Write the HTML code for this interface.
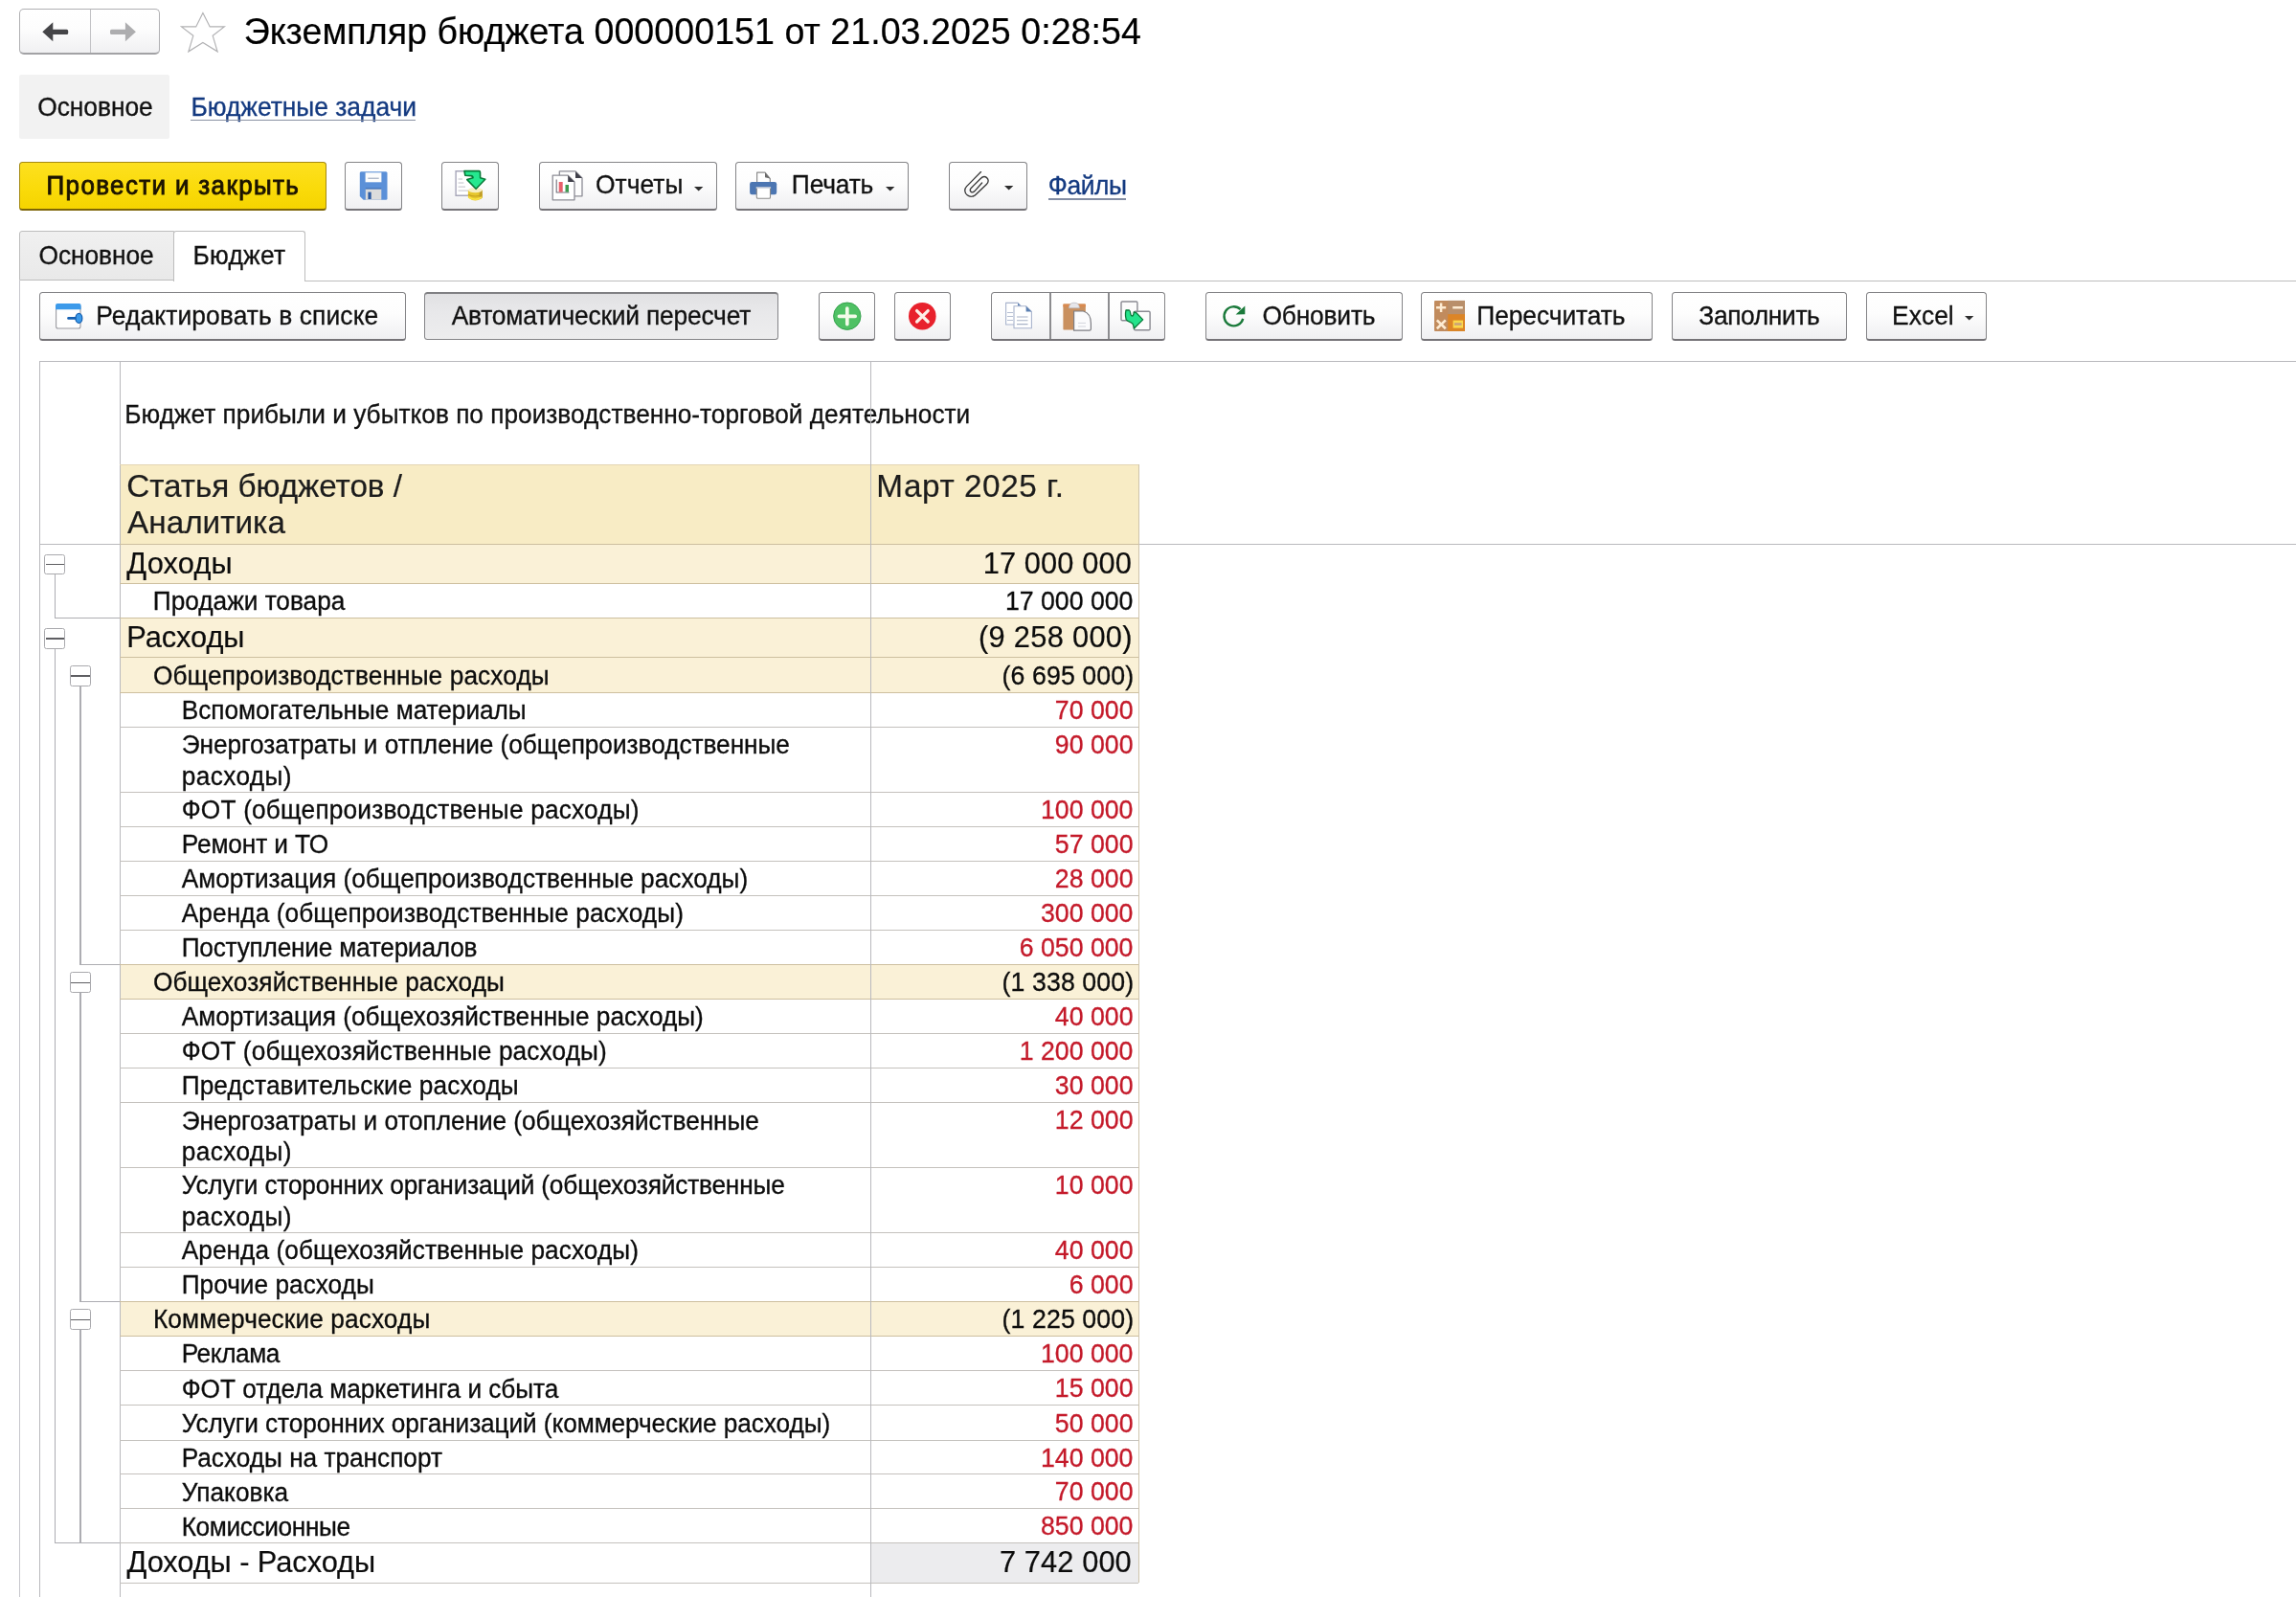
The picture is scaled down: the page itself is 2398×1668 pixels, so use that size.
<!DOCTYPE html><html><head><meta charset="utf-8"><title>1C</title><style>
html,body{margin:0;padding:0;background:#fff;}
body{width:2398px;height:1668px;overflow:hidden;position:relative;font-family:"Liberation Sans",sans-serif;}
#L{position:absolute;left:0;top:0;width:2398px;height:1668px;will-change:transform;}
.t{position:absolute;white-space:nowrap;transform:scaleY(1.06);transform-origin:0 84.65%;-webkit-text-stroke:0.3px;}
.a{position:absolute;}
.btn{position:absolute;box-sizing:border-box;border:1.5px solid #848487;border-bottom:2.7px solid #757377;border-radius:3.5px;background:linear-gradient(#ffffff 0%,#fdfdfd 45%,#f0f0f2 100%);}
.btn.pressed{background:linear-gradient(#e1e1e3,#e8e8ea 40%,#ededee);border:1.5px solid #858588;border-top:2.4px solid #808083;border-bottom:1.6px solid #858588;}
.hl{position:absolute;height:1px;}
.vl{position:absolute;width:1px;}
svg{position:absolute;overflow:visible;}
</style></head><body><div id="L">
<div class="btn" style="left:19.8px;top:9px;width:146.8px;height:48.2px;border-radius:5px;border:1.4px solid #b0b0b3;border-bottom:2px solid #a2a2a5;"></div>
<div class="vl" style="left:94px;top:10.4px;height:45px;background:#c2c2c5;"></div>
<svg style="left:40px;top:20px" width="36" height="28" viewBox="40 20 36 28"><path d="M44.3 33.3 L55.3 23.3 L55.3 30.7 L69.6 30.7 Q71.2 30.7 71.2 32.3 L71.2 34.4 Q71.2 36 69.6 36 L55.3 36 L55.3 43.2 Z" fill="#454548"/></svg>
<svg style="left:110px;top:20px" width="36" height="28" viewBox="110 20 36 28"><path d="M141.9 33.3 L130.9 23.3 L130.9 30.7 L116.6 30.7 Q115 30.7 115 32.3 L115 34.4 Q115 36 116.6 36 L130.9 36 L130.9 43.2 Z" fill="#adadaf"/></svg>
<svg style="left:186px;top:10px" width="52" height="48" viewBox="186 10 52 48"><path d="M211.9 13.6 L219.2 27.9 L234.3 27.9 L222.2 37.3 L227.1 53.8 L211.9 44.5 L196.9 53.8 L201.8 37.3 L189.5 27.9 L204.7 27.9 Z" fill="#fff" stroke="#b2b2b4" stroke-width="1.2" stroke-linejoin="miter"/></svg>
<div class="t" style="top:15.07px;font-size:37.6px;line-height:37.6px;color:#000;transform:scaleY(1.02);-webkit-text-stroke:0.2px;letter-spacing:0.04px;left:254.68px;">Экземпляр бюджета 000000151 от 21.03.2025 0:28:54</div>
<div class="a" style="left:20px;top:78px;width:157px;height:67px;background:#f2f2f2;border-radius:2px;"></div>
<div class="t" style="top:98.65px;font-size:26.4px;line-height:26.4px;color:#111;letter-spacing:-0.066px;left:39.26px;">Основное</div>
<div class="t" style="top:98.75px;font-size:26.4px;line-height:26.4px;color:#143a80;letter-spacing:-0.02px;left:199.44px;">Бюджетные задачи</div>
<div class="hl" style="left:199px;top:124.7px;width:235px;height:1.5px;background:#8b92a3;"></div>
<div class="btn" style="left:19.9px;top:169px;width:321.6px;height:50.8px;background:linear-gradient(#fde020,#fadb0a 55%,#f5d400);border:1.5px solid #a58a12;border-bottom:2.5px solid #7d6507;"></div>
<div class="t" style="top:180.79px;font-size:26.0px;line-height:26.0px;color:#1c1400;letter-spacing:1.343px;left:48.59px;-webkit-text-stroke:0.85px;">Провести и закрыть</div>
<div class="btn" style="left:360.2px;top:169.2px;width:59.5px;height:50.6px;"></div>
<svg style="left:372px;top:176px" width="36" height="36" viewBox="372 176 36 36"><path d="M377.2 179.3 H403 Q404.5 179.3 404.5 180.8 V207.2 Q404.5 208.7 403 208.7 H379.6 L375.8 205 V180.8 Q375.8 179.3 377.2 179.3 Z" fill="#5b90d8"/><rect x="381.6" y="180.3" width="16.8" height="10" fill="#fdfdfd"/><rect x="384.3" y="185.6" width="11.4" height="1.3" fill="#a9b4c6"/><rect x="381.8" y="197.3" width="16.5" height="11.4" fill="#dcdcdc"/><rect x="381.8" y="196.3" width="16.5" height="1.2" fill="#3f6fb6"/><rect x="384.4" y="200.6" width="3.3" height="7.4" fill="#2f5da3"/></svg>
<div class="btn" style="left:461.4px;top:169.2px;width:59.6px;height:50.6px;"></div>
<svg style="left:472px;top:174px" width="40" height="40" viewBox="472 174 40 40"><rect x="476.1" y="178.8" width="16" height="25.4" fill="#fff"/><path d="M492 178.8 H476.1 V204.2 H492" fill="none" stroke="#a8a7ba" stroke-width="1.4"/><g stroke="#c0c0c8" stroke-width="1"><path d="M478.6 187 H483 M478.6 191 H484.4 M478.6 195.1 H486 M478.6 199.1 H489"/></g><path d="M488.9 198.5 V206.6 Q496.3 212.4 503.7 206.6 V198.5 Z" fill="#e6c62e"/><path d="M500.6 198.5 V208.6 Q503 207.6 503.7 206.6 V198.5 Z" fill="#bf9d2c"/><ellipse cx="496.3" cy="198.6" rx="7.4" ry="2.6" fill="#f7eec4"/><path d="M489 203.2 Q496.3 206.8 503.6 203.2" stroke="#c6a21e" stroke-width="1.1" fill="none"/><path d="M489.4 206 Q496.3 210.4 503.2 206" stroke="#f9e244" stroke-width="1.6" fill="none"/><path d="M485 178.5 L500.4 178.6 Q501.6 178.8 501.5 180 L501.6 185.8 L506.8 187.3 L497.1 197.3 L487.8 187.6 L494 185.8 Q494 183.8 492 183.6 L485.8 183.2 Z" fill="#25e88f" stroke="#087a38" stroke-width="1.6" stroke-linejoin="round"/></svg>
<div class="btn" style="left:562.8px;top:169.2px;width:186.2px;height:50.6px;"></div>
<svg style="left:574px;top:176px" width="38" height="36" viewBox="574 176 38 36"><path d="M584.3 178.9 H601 L608 186 V204.8 H584.3 Z" fill="#fdfdfd" stroke="#8d8d96" stroke-width="1.3" stroke-linejoin="round"/><path d="M601 178.9 V186 H608 Z" fill="#40404a"/><path d="M577.2 183.2 H593.2 L600 190 V208.8 H577.2 Z" fill="#fff" stroke="#8d8d96" stroke-width="1.3" stroke-linejoin="round"/><path d="M593.2 183.2 V190 H600 Z" fill="#40404a"/><path d="M581.2 187.4 V201 H594.4" fill="none" stroke="#70707a" stroke-width="1.1"/><rect x="583.7" y="190" width="4" height="10.6" fill="#e8606b"/><rect x="590.5" y="193" width="3.5" height="7.6" fill="#3f9a50"/></svg>
<div class="t" style="top:180.35px;font-size:26.4px;line-height:26.4px;color:#111;letter-spacing:0.04px;left:621.96px;">Отчеты</div>
<svg style="left:725.3px;top:194.5px" width="9.4" height="4.6" viewBox="0 0 9.4 4.6"><path d="M0 0 L9.4 0 L4.7 4.6 Z" fill="#2e2e2e"/></svg>
<div class="btn" style="left:768px;top:169.2px;width:181px;height:50.6px;"></div>
<svg style="left:780px;top:176px" width="36" height="36" viewBox="780 176 36 36"><path d="M790.6 190 V180.2 H799 L804.3 186.6 V190" fill="#fff" stroke="#8c8c8c" stroke-width="1.2" stroke-linejoin="round"/><path d="M799 180.2 V185.2 L804.3 186.6 Z" fill="#6a6a6a"/><rect x="783.1" y="190" width="28.1" height="13.3" rx="2.2" fill="#4c76b2"/><path d="M790.3 196 H804.5 V206 Q804.5 207.3 803.2 207.3 H791.8 Q790.3 207.3 790.3 206 Z" fill="#fff" stroke="#8c8c8c" stroke-width="1.1"/><rect x="789.7" y="195.4" width="15.4" height="1.2" fill="#dfe8f6"/></svg>
<div class="t" style="top:180.35px;font-size:26.4px;line-height:26.4px;color:#111;letter-spacing:-0.193px;left:826.86px;">Печать</div>
<svg style="left:925px;top:194.5px" width="9.4" height="4.6" viewBox="0 0 9.4 4.6"><path d="M0 0 L9.4 0 L4.7 4.6 Z" fill="#2e2e2e"/></svg>
<div class="btn" style="left:991.1px;top:169.2px;width:81.7px;height:50.6px;"></div>
<svg style="left:1004px;top:175px" width="34" height="36" viewBox="1004 175 34 36"><path d="M1024.5 179.6 L1009.6 194.6 C1006.8 197.6 1007.4 201.6 1010.2 203.8 C1013 206 1016.8 205.6 1019.4 203 L1030.4 192.4 C1032.8 190 1032.6 187.2 1030.6 185.6 C1028.6 184 1026.2 184.4 1024.2 186.4 L1014.2 196.4 C1012.8 197.8 1013 199.6 1014.2 200.4 C1015.4 201.2 1016.8 200.8 1018 199.6 L1025.6 191" fill="none" stroke="#3a3a3a" stroke-width="1.35" stroke-linecap="round"/></svg>
<svg style="left:1049.4px;top:194.2px" width="9.4" height="4.6" viewBox="0 0 9.4 4.6"><path d="M0 0 L9.4 0 L4.7 4.6 Z" fill="#2e2e2e"/></svg>
<div class="t" style="top:181.45px;font-size:26.4px;line-height:26.4px;color:#143a80;letter-spacing:-0.368px;left:1094.70px;">Файлы</div>
<div class="hl" style="left:1095.2px;top:207.1px;width:80.8px;height:1.6px;background:#838da3;"></div>
<div class="a" style="left:20px;top:241px;width:162px;height:52px;box-sizing:border-box;border:1px solid #bdbdbd;border-radius:3px 0 0 0;background:linear-gradient(#f0f0f0,#e9e9e9);"></div>
<div class="a" style="left:181px;top:241px;width:138px;height:53px;box-sizing:border-box;border:1px solid #bdbdbd;border-bottom:none;border-radius:3px 3px 0 0;background:#fff;"></div>
<div class="hl" style="left:318px;top:293px;width:2080px;background:#bdbdbd;"></div>
<div class="vl" style="left:20px;top:293px;height:1375px;background:#c6c6cc;"></div>
<div class="t" style="top:253.65px;font-size:26.4px;line-height:26.4px;color:#111;letter-spacing:-0.123px;left:40.56px;">Основное</div>
<div class="t" style="top:253.65px;font-size:26.4px;line-height:26.4px;color:#111;letter-spacing:0.2px;left:201.54px;">Бюджет</div>
<div class="btn " style="left:41.4px;top:305.3px;width:382.2px;height:50.6px;"></div>
<svg style="left:55px;top:314px" width="36" height="34" viewBox="55 314 36 34"><path d="M58.6 320 V341 Q58.6 343 60.6 343 H82 Q84 343 84 341 V320 Z" fill="#fff" stroke="#9a9aa0" stroke-width="1.1"/><path d="M58 323.2 V319 Q58 317 60 317 H82.6 Q84.6 317 84.6 319 V323.2 Z" fill="#3c9aea"/><rect x="70.2" y="331" width="10" height="2.8" rx="1.3" fill="#1560b2"/><ellipse cx="82.4" cy="332.4" rx="3.4" ry="5" fill="#3c9aea" stroke="#1560b2" stroke-width="1.3"/></svg>
<div class="t" style="top:316.85px;font-size:26.4px;line-height:26.4px;color:#111;letter-spacing:0.095px;left:100.34px;">Редактировать в списке</div>
<div class="btn pressed" style="left:442.9px;top:305.3px;width:370.0px;height:49.6px;"></div>
<div class="t" style="top:316.85px;font-size:26.4px;line-height:26.4px;color:#111;letter-spacing:-0.215px;left:471.65px;">Автоматический пересчет</div>
<div class="btn " style="left:855px;top:305.3px;width:59.4px;height:50.6px;"></div>
<svg style="left:868px;top:314px" width="34" height="34" viewBox="868 314 34 34"><circle cx="884.8" cy="330.2" r="14.2" fill="#4fc164" stroke="#2c9b45" stroke-width="0.9"/><path d="M876.4 330.3 H893.2 M884.8 322 V338.6" stroke="#f3fbe9" stroke-width="3.7" stroke-linecap="round"/></svg>
<div class="btn " style="left:933.5px;top:305.3px;width:59.4px;height:50.6px;"></div>
<svg style="left:946px;top:314px" width="34" height="34" viewBox="946 314 34 34"><circle cx="963.3" cy="330.2" r="14.3" fill="#e8212c"/><path d="M957.6 324.6 L969.2 336 M969.2 324.6 L957.6 336" stroke="#fdeee6" stroke-width="3.3" stroke-linecap="round"/></svg>
<div class="btn " style="left:1034.9px;top:305.3px;width:181.9px;height:50.6px;"></div>
<div class="vl" style="left:1096px;top:306px;height:48px;width:1.5px;background:#8c8c8f;"></div>
<div class="vl" style="left:1157px;top:306px;height:48px;width:1.5px;background:#8c8c8f;"></div>
<svg style="left:1046px;top:312px" width="36" height="36" viewBox="1046 312 36 36"><path d="M1050.6 316.4 H1063 L1068 321.4 V339 H1050.6 Z" fill="#fff" stroke="#a9b4cd" stroke-width="1.1"/><path d="M1063 316.4 L1068 321.4 H1063 Z" fill="#5b80b2"/><g stroke="#b5bed2" stroke-width="1"><path d="M1052 326.5 H1058 M1052 330.5 H1058 M1052 334.5 H1058"/></g><path d="M1059 319.8 H1071.6 L1077.4 325.6 V342.8 H1059 Z" fill="#fff" stroke="#a9b4cd" stroke-width="1.1"/><path d="M1071.6 319.8 L1077.4 325.6 H1071.6 Z" fill="#5b80b2"/><g stroke="#a9b2c8" stroke-width="1.1"><path d="M1062 331 H1073.5 M1062 334.8 H1073.5 M1062 338.6 H1073.5"/></g></svg>
<svg style="left:1106px;top:312px" width="38" height="38" viewBox="1106 312 38 38"><rect x="1110.4" y="317.6" width="23.4" height="27" rx="1.2" fill="#c9905f"/><rect x="1110.4" y="317.6" width="23.4" height="3" fill="#d98a50"/><path d="M1116.4 321.8 Q1116.4 316.2 1121.9 316.2 Q1127.4 316.2 1127.4 321.8 Z" fill="#e6e6ea" stroke="#b5b5bb" stroke-width="0.7"/><path d="M1121.6 325 H1131.4 Q1139.4 327 1139.4 338 V343.6 Q1139.4 345.2 1137.8 345.2 H1121.6 Z" fill="#fbfbfd" stroke="#7d7d82" stroke-width="1.2"/><g stroke="#d3d5dd" stroke-width="1"><path d="M1126 337.4 H1134 M1126 341 H1134"/></g></svg>
<svg style="left:1166px;top:310px" width="40" height="40" viewBox="1166 310 40 40"><rect x="1171" y="315" width="16.9" height="19.7" rx="1.2" fill="#fcfcfc" stroke="#8a8a92" stroke-width="1.4"/><rect x="1184.5" y="325.2" width="16.6" height="19.6" rx="1.2" fill="#fcfcfc" stroke="#8a8a92" stroke-width="1.4"/><path d="M1176 323.8 L1179.4 324 Q1180.4 324.4 1180.7 327.2 Q1181 330 1182.8 330 Q1184 329.8 1184.2 326 L1186.8 326.7 L1193.7 333.9 L1184.4 343 Q1183.6 339 1183 338.2 Q1181.6 336.8 1179.6 336.1 Q1177 335.2 1176.2 333.8 Q1175.2 330 1175.5 327 Z" fill="#24e38b" stroke="#0a7a3a" stroke-width="1.3" stroke-linejoin="round"/></svg>
<div class="btn " style="left:1259px;top:305.3px;width:205.8px;height:50.6px;"></div>
<svg style="left:1274px;top:316px" width="32" height="30" viewBox="1274 316 32 30"><path d="M1298.2 332.9 A10 10 0 1 1 1295.6 323.2" fill="none" stroke="#1b7a3b" stroke-width="2.4" stroke-linecap="butt"/><path d="M1300.3 319.6 V328.2 L1290.6 328.4 Z" fill="#1b7a3b"/></svg>
<div class="t" style="top:316.85px;font-size:26.4px;line-height:26.4px;color:#111;letter-spacing:-0.202px;left:1318.46px;">Обновить</div>
<div class="btn " style="left:1484.1px;top:305.3px;width:242.1px;height:50.6px;"></div>
<svg style="left:1496px;top:312px" width="36" height="36" viewBox="1496 312 36 36"><rect x="1498" y="313.9" width="32" height="32" rx="1" fill="#c18b5d"/><rect x="1512.2" y="313.9" width="17.8" height="14.4" fill="#b98f6a"/><rect x="1512.2" y="328.2" width="17.8" height="17.7" fill="#dc8526"/><path d="M1500 321.2 H1510.2 M1505.1 316.5 V325.9" stroke="#fdebd2" stroke-width="2.5"/><rect x="1517.2" y="320" width="10.6" height="2.5" fill="#fdebd2"/><path d="M1500.8 334.4 L1509.8 343.2 M1509.8 334.4 L1500.8 343.2" stroke="#fdebd2" stroke-width="2.7"/><rect x="1517.6" y="334.6" width="10.4" height="8" fill="#fbd84c"/><rect x="1519" y="337.2" width="7.6" height="2.6" fill="#c9a27a"/></svg>
<div class="t" style="top:316.85px;font-size:26.4px;line-height:26.4px;color:#111;letter-spacing:-0.086px;left:1542.26px;">Пересчитать</div>
<div class="btn " style="left:1745.5px;top:305.3px;width:183.3px;height:50.6px;"></div>
<div class="t" style="top:316.85px;font-size:26.4px;line-height:26.4px;color:#111;letter-spacing:-0.384px;left:1774.36px;">Заполнить</div>
<div class="btn " style="left:1948.5px;top:305.3px;width:126.9px;height:50.6px;"></div>
<div class="t" style="top:316.85px;font-size:26.4px;line-height:26.4px;color:#111;letter-spacing:0.04px;left:1976.04px;">Excel</div>
<svg style="left:2052px;top:329.8px" width="9.4" height="4.6" viewBox="0 0 9.4 4.6"><path d="M0 0 L9.4 0 L4.7 4.6 Z" fill="#2e2e2e"/></svg>
<div class="hl" style="left:41px;top:377px;width:2357px;background:#b9b9bd;"></div>
<div class="vl" style="left:41px;top:377px;height:1300px;background:#b9b9bd;"></div>
<div class="vl" style="left:125px;top:377px;height:1300px;background:#b9b9bd;"></div>
<div class="a" style="left:126px;top:485px;width:1063px;height:83px;background:#f8ecc5;"></div>
<div class="a" style="left:126px;top:569px;width:1063px;height:40px;background:#faf1d7;"></div>
<div class="t" style="top:573.63px;font-size:30.8px;line-height:30.8px;color:#0c0c0c;transform:none;-webkit-text-stroke:0.2px;letter-spacing:0.162px;left:132.30px;">Доходы</div>
<div class="t" style="top:573.63px;font-size:30.8px;line-height:30.8px;color:#0c0c0c;transform:none;-webkit-text-stroke:0.2px;letter-spacing:0.1px;left:1026.72px;">17 000 000</div>
<div class="t" style="top:615.48px;font-size:26.25px;line-height:26.25px;color:#0c0c0c;letter-spacing:-0.008px;left:159.80px;">Продажи товара</div>
<div class="t" style="top:615.10px;font-size:26.7px;line-height:26.7px;color:#0c0c0c;left:1049.88px;">17 000 000</div>
<div class="a" style="left:126px;top:646px;width:1063px;height:40px;background:#faf1d7;"></div>
<div class="t" style="top:650.63px;font-size:30.8px;line-height:30.8px;color:#0c0c0c;transform:none;-webkit-text-stroke:0.2px;letter-spacing:-0.089px;left:132.30px;">Расходы</div>
<div class="t" style="top:650.63px;font-size:30.8px;line-height:30.8px;color:#0c0c0c;transform:none;-webkit-text-stroke:0.2px;letter-spacing:0.3px;left:1021.97px;">(9 258 000)</div>
<div class="a" style="left:126px;top:687px;width:1063px;height:36px;background:#faf1d7;"></div>
<div class="t" style="top:692.98px;font-size:26.25px;line-height:26.25px;color:#0c0c0c;letter-spacing:0.105px;left:159.90px;">Общепроизводственные расходы</div>
<div class="t" style="top:692.60px;font-size:26.7px;line-height:26.7px;color:#0c0c0c;letter-spacing:0.1px;left:1046.58px;">(6 695 000)</div>
<div class="t" style="top:729.18px;font-size:26.25px;line-height:26.25px;color:#0c0c0c;letter-spacing:-0.053px;left:189.70px;">Вспомогательные материалы</div>
<div class="t" style="top:728.80px;font-size:26.7px;line-height:26.7px;color:#c41a2a;left:1101.87px;">70 000</div>
<div class="t" style="top:765.28px;font-size:26.25px;line-height:26.25px;color:#0c0c0c;letter-spacing:-0.042px;left:189.70px;">Энергозатраты и отпление (общепроизводственные</div>
<div class="t" style="top:797.78px;font-size:26.25px;line-height:26.25px;color:#0c0c0c;letter-spacing:0.388px;left:189.70px;">расходы)</div>
<div class="t" style="top:764.90px;font-size:26.7px;line-height:26.7px;color:#c41a2a;left:1101.87px;">90 000</div>
<div class="t" style="top:833.48px;font-size:26.25px;line-height:26.25px;color:#0c0c0c;letter-spacing:0.19px;left:189.70px;">ФОТ (общепроизводственые расходы)</div>
<div class="t" style="top:833.10px;font-size:26.7px;line-height:26.7px;color:#c41a2a;left:1086.99px;">100 000</div>
<div class="t" style="top:869.48px;font-size:26.25px;line-height:26.25px;color:#0c0c0c;letter-spacing:-0.108px;left:189.70px;">Ремонт и ТО</div>
<div class="t" style="top:869.10px;font-size:26.7px;line-height:26.7px;color:#c41a2a;left:1101.87px;">57 000</div>
<div class="t" style="top:905.48px;font-size:26.25px;line-height:26.25px;color:#0c0c0c;letter-spacing:0.005px;left:189.70px;">Амортизация (общепроизводственные расходы)</div>
<div class="t" style="top:905.10px;font-size:26.7px;line-height:26.7px;color:#c41a2a;left:1101.87px;">28 000</div>
<div class="t" style="top:941.48px;font-size:26.25px;line-height:26.25px;color:#0c0c0c;letter-spacing:0.089px;left:189.70px;">Аренда (общепроизводственные расходы)</div>
<div class="t" style="top:941.10px;font-size:26.7px;line-height:26.7px;color:#c41a2a;left:1086.99px;">300 000</div>
<div class="t" style="top:977.48px;font-size:26.25px;line-height:26.25px;color:#0c0c0c;letter-spacing:-0.229px;left:189.70px;">Поступление материалов</div>
<div class="t" style="top:977.10px;font-size:26.7px;line-height:26.7px;color:#c41a2a;left:1064.73px;">6 050 000</div>
<div class="a" style="left:126px;top:1008px;width:1063px;height:35px;background:#faf1d7;"></div>
<div class="t" style="top:1013.48px;font-size:26.25px;line-height:26.25px;color:#0c0c0c;letter-spacing:0.073px;left:159.90px;">Общехозяйственные расходы</div>
<div class="t" style="top:1013.10px;font-size:26.7px;line-height:26.7px;color:#0c0c0c;letter-spacing:0.1px;left:1046.58px;">(1 338 000)</div>
<div class="t" style="top:1049.48px;font-size:26.25px;line-height:26.25px;color:#0c0c0c;letter-spacing:-0.015px;left:189.70px;">Амортизация (общехозяйственные расходы)</div>
<div class="t" style="top:1049.10px;font-size:26.7px;line-height:26.7px;color:#c41a2a;left:1101.87px;">40 000</div>
<div class="t" style="top:1085.48px;font-size:26.25px;line-height:26.25px;color:#0c0c0c;letter-spacing:0.114px;left:189.70px;">ФОТ (общехозяйственные расходы)</div>
<div class="t" style="top:1085.10px;font-size:26.7px;line-height:26.7px;color:#c41a2a;left:1064.73px;">1 200 000</div>
<div class="t" style="top:1121.48px;font-size:26.25px;line-height:26.25px;color:#0c0c0c;letter-spacing:0.091px;left:189.70px;">Представительские расходы</div>
<div class="t" style="top:1121.10px;font-size:26.7px;line-height:26.7px;color:#c41a2a;left:1101.87px;">30 000</div>
<div class="t" style="top:1157.68px;font-size:26.25px;line-height:26.25px;color:#0c0c0c;letter-spacing:-0.06px;left:189.70px;">Энергозатраты и отопление (общехозяйственные</div>
<div class="t" style="top:1190.18px;font-size:26.25px;line-height:26.25px;color:#0c0c0c;letter-spacing:0.388px;left:189.70px;">расходы)</div>
<div class="t" style="top:1157.30px;font-size:26.7px;line-height:26.7px;color:#c41a2a;left:1101.87px;">12 000</div>
<div class="t" style="top:1225.28px;font-size:26.25px;line-height:26.25px;color:#0c0c0c;letter-spacing:-0.185px;left:189.70px;">Услуги сторонних организаций (общехозяйственные</div>
<div class="t" style="top:1257.78px;font-size:26.25px;line-height:26.25px;color:#0c0c0c;letter-spacing:0.388px;left:189.70px;">расходы)</div>
<div class="t" style="top:1224.90px;font-size:26.7px;line-height:26.7px;color:#c41a2a;left:1101.87px;">10 000</div>
<div class="t" style="top:1293.48px;font-size:26.25px;line-height:26.25px;color:#0c0c0c;letter-spacing:0.055px;left:189.70px;">Аренда (общехозяйственные расходы)</div>
<div class="t" style="top:1293.10px;font-size:26.7px;line-height:26.7px;color:#c41a2a;left:1101.87px;">40 000</div>
<div class="t" style="top:1329.48px;font-size:26.25px;line-height:26.25px;color:#0c0c0c;letter-spacing:0.003px;left:189.70px;">Прочие расходы</div>
<div class="t" style="top:1329.10px;font-size:26.7px;line-height:26.7px;color:#c41a2a;left:1116.71px;">6 000</div>
<div class="a" style="left:126px;top:1360px;width:1063px;height:35px;background:#faf1d7;"></div>
<div class="t" style="top:1365.48px;font-size:26.25px;line-height:26.25px;color:#0c0c0c;letter-spacing:0.105px;left:159.90px;">Коммерческие расходы</div>
<div class="t" style="top:1365.10px;font-size:26.7px;line-height:26.7px;color:#0c0c0c;letter-spacing:0.1px;left:1046.58px;">(1 225 000)</div>
<div class="t" style="top:1401.48px;font-size:26.25px;line-height:26.25px;color:#0c0c0c;letter-spacing:-0.419px;left:189.70px;">Реклама</div>
<div class="t" style="top:1401.10px;font-size:26.7px;line-height:26.7px;color:#c41a2a;left:1086.99px;">100 000</div>
<div class="t" style="top:1437.78px;font-size:26.25px;line-height:26.25px;color:#0c0c0c;letter-spacing:-0.057px;left:189.70px;">ФОТ отдела маркетинга и сбыта</div>
<div class="t" style="top:1437.40px;font-size:26.7px;line-height:26.7px;color:#c41a2a;left:1101.87px;">15 000</div>
<div class="t" style="top:1473.88px;font-size:26.25px;line-height:26.25px;color:#0c0c0c;letter-spacing:-0.097px;left:189.70px;">Услуги сторонних организаций (коммерческие расходы)</div>
<div class="t" style="top:1473.50px;font-size:26.7px;line-height:26.7px;color:#c41a2a;left:1101.87px;">50 000</div>
<div class="t" style="top:1509.98px;font-size:26.25px;line-height:26.25px;color:#0c0c0c;letter-spacing:-0.029px;left:189.70px;">Расходы на транспорт</div>
<div class="t" style="top:1509.60px;font-size:26.7px;line-height:26.7px;color:#c41a2a;left:1086.99px;">140 000</div>
<div class="t" style="top:1545.78px;font-size:26.25px;line-height:26.25px;color:#0c0c0c;letter-spacing:0.025px;left:189.70px;">Упаковка</div>
<div class="t" style="top:1545.40px;font-size:26.7px;line-height:26.7px;color:#c41a2a;left:1101.87px;">70 000</div>
<div class="t" style="top:1581.58px;font-size:26.25px;line-height:26.25px;color:#0c0c0c;letter-spacing:-0.374px;left:189.70px;">Комиссионные</div>
<div class="t" style="top:1581.20px;font-size:26.7px;line-height:26.7px;color:#c41a2a;left:1086.99px;">850 000</div>
<div class="a" style="left:910px;top:1612px;width:279px;height:41px;background:#ececee;"></div>
<div class="t" style="top:1616.63px;font-size:30.8px;line-height:30.8px;color:#0c0c0c;transform:none;-webkit-text-stroke:0.2px;letter-spacing:-0.069px;left:132.50px;">Доходы - Расходы</div>
<div class="t" style="top:1616.63px;font-size:30.8px;line-height:30.8px;color:#0c0c0c;transform:none;-webkit-text-stroke:0.2px;letter-spacing:0.1px;left:1043.94px;">7 742 000</div>
<div class="t" style="top:419.68px;font-size:26.25px;line-height:26.25px;color:#111;letter-spacing:-0.001px;left:130.35px;">Бюджет прибыли и убытков по производственно-торговой деятельности</div>
<div class="t" style="top:490.51px;font-size:33.3px;line-height:33.3px;color:#1c1c1c;transform:none;-webkit-text-stroke:0.2px;letter-spacing:-0.055px;left:132.24px;">Статья бюджетов /</div>
<div class="t" style="top:529.31px;font-size:33.3px;line-height:33.3px;color:#1c1c1c;transform:none;-webkit-text-stroke:0.2px;letter-spacing:0.012px;left:133.03px;">Аналитика</div>
<div class="t" style="top:490.81px;font-size:33.3px;line-height:33.3px;color:#1c1c1c;transform:none;-webkit-text-stroke:0.2px;letter-spacing:0.55px;left:915.37px;">Март 2025 г.</div>
<div class="hl" style="left:125px;top:485px;width:1064px;background:#e3d6b4;"></div>
<div class="hl" style="left:41px;top:568px;width:2357px;background:#b9b9bd;"></div>
<div class="hl" style="left:125px;top:568px;width:1064px;background:#cdbf9f;"></div>
<div class="hl" style="left:125px;top:609px;width:1064px;background:#cdbf9f;"></div>
<div class="hl" style="left:125px;top:645px;width:1064px;background:#cdbf9f;"></div>
<div class="hl" style="left:125px;top:686px;width:1064px;background:#cdbf9f;"></div>
<div class="hl" style="left:125px;top:723px;width:1064px;background:#cdbf9f;"></div>
<div class="hl" style="left:125px;top:759px;width:1064px;background:#c4c1bd;"></div>
<div class="hl" style="left:125px;top:827px;width:1064px;background:#c4c1bd;"></div>
<div class="hl" style="left:125px;top:863px;width:1064px;background:#c4c1bd;"></div>
<div class="hl" style="left:125px;top:899px;width:1064px;background:#c4c1bd;"></div>
<div class="hl" style="left:125px;top:935px;width:1064px;background:#c4c1bd;"></div>
<div class="hl" style="left:125px;top:971px;width:1064px;background:#c4c1bd;"></div>
<div class="hl" style="left:125px;top:1007px;width:1064px;background:#cdbf9f;"></div>
<div class="hl" style="left:125px;top:1043px;width:1064px;background:#cdbf9f;"></div>
<div class="hl" style="left:125px;top:1079px;width:1064px;background:#c4c1bd;"></div>
<div class="hl" style="left:125px;top:1115px;width:1064px;background:#c4c1bd;"></div>
<div class="hl" style="left:125px;top:1151px;width:1064px;background:#c4c1bd;"></div>
<div class="hl" style="left:125px;top:1219px;width:1064px;background:#c4c1bd;"></div>
<div class="hl" style="left:125px;top:1287px;width:1064px;background:#c4c1bd;"></div>
<div class="hl" style="left:125px;top:1323px;width:1064px;background:#c4c1bd;"></div>
<div class="hl" style="left:125px;top:1359px;width:1064px;background:#cdbf9f;"></div>
<div class="hl" style="left:125px;top:1395px;width:1064px;background:#cdbf9f;"></div>
<div class="hl" style="left:125px;top:1431px;width:1064px;background:#c4c1bd;"></div>
<div class="hl" style="left:125px;top:1467px;width:1064px;background:#c4c1bd;"></div>
<div class="hl" style="left:125px;top:1504px;width:1064px;background:#c4c1bd;"></div>
<div class="hl" style="left:125px;top:1539px;width:1064px;background:#c4c1bd;"></div>
<div class="hl" style="left:125px;top:1575px;width:1064px;background:#c4c1bd;"></div>
<div class="hl" style="left:125px;top:1611px;width:1064px;background:#c4c1bd;"></div>
<div class="hl" style="left:125px;top:1653px;width:1064px;background:#c4c1bd;"></div>
<div class="vl" style="left:909px;top:377px;height:1300px;background:#b9b9bd;"></div>
<div class="vl" style="left:1189px;top:485px;height:1168px;background:#cfc4ad;"></div>
<div class="vl" style="left:56.7px;top:600px;height:45.5px;width:1.2px;background:#adadb2;"></div>
<div class="hl" style="left:56.7px;top:644.6px;width:68.5px;height:1.2px;background:#adadb2;"></div>
<div class="vl" style="left:56.7px;top:677px;height:934.4000000000001px;width:1.2px;background:#adadb2;"></div>
<div class="hl" style="left:56.7px;top:1610.6px;width:68.5px;height:1.2px;background:#adadb2;"></div>
<div class="vl" style="left:83.4px;top:716px;height:291.5px;width:1.2px;background:#adadb2;"></div>
<div class="hl" style="left:83.4px;top:1006.6px;width:42px;height:1.2px;background:#adadb2;"></div>
<div class="vl" style="left:83.4px;top:1036px;height:323.5px;width:1.2px;background:#adadb2;"></div>
<div class="hl" style="left:83.4px;top:1358.6px;width:42px;height:1.2px;background:#adadb2;"></div>
<div class="vl" style="left:83.4px;top:1388px;height:223.5px;width:1.2px;background:#adadb2;"></div>
<div class="a" style="left:46.3px;top:578.6px;width:21.8px;height:21.8px;box-sizing:border-box;border:1.3px solid #a9a9ad;border-radius:2.5px;background:#fff;"></div>
<div class="hl" style="left:47.6px;top:588.8px;width:19.2px;height:1.4px;background:#5e5e62;"></div>
<div class="a" style="left:46.3px;top:656.1px;width:21.8px;height:21.8px;box-sizing:border-box;border:1.3px solid #a9a9ad;border-radius:2.5px;background:#fff;"></div>
<div class="hl" style="left:47.6px;top:666.3px;width:19.2px;height:1.4px;background:#5e5e62;"></div>
<div class="a" style="left:73.1px;top:695.0px;width:21.8px;height:21.8px;box-sizing:border-box;border:1.3px solid #a9a9ad;border-radius:2.5px;background:#fff;"></div>
<div class="hl" style="left:74.4px;top:705.2px;width:19.2px;height:1.4px;background:#5e5e62;"></div>
<div class="a" style="left:73.1px;top:1015.3px;width:21.8px;height:21.8px;box-sizing:border-box;border:1.3px solid #a9a9ad;border-radius:2.5px;background:#fff;"></div>
<div class="hl" style="left:74.4px;top:1025.5px;width:19.2px;height:1.4px;background:#5e5e62;"></div>
<div class="a" style="left:73.1px;top:1367.3px;width:21.8px;height:21.8px;box-sizing:border-box;border:1.3px solid #a9a9ad;border-radius:2.5px;background:#fff;"></div>
<div class="hl" style="left:74.4px;top:1377.5px;width:19.2px;height:1.4px;background:#5e5e62;"></div>
</div></body></html>
